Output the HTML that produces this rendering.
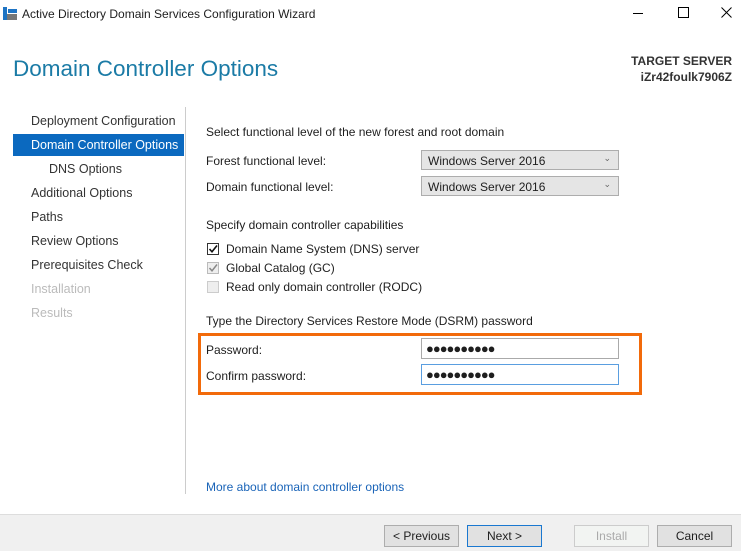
<!DOCTYPE html>
<html><head><style>
body{margin:0;width:741px;height:550px;background:#fff;font-family:"Liberation Sans",sans-serif;font-size:12px;color:#1e1e1e;position:relative;overflow:hidden}
.a{position:absolute;white-space:nowrap}
.nav{left:31px;color:#333;font-size:12.5px}
.sel{position:absolute;left:421px;width:198px;height:20px;border:1px solid #adadad;background:#e5e5e5;box-sizing:border-box}
.sel span{position:absolute;left:6px;top:3px}
.sel i{position:absolute;right:7px;top:2px;font-style:normal;font-size:9px;color:#666}
.cb{position:absolute;left:207px;width:12px;height:12px;border:1px solid #333;box-sizing:border-box;background:#fff}
.inp{position:absolute;left:421px;width:198px;height:21px;border:1px solid #aaa;box-sizing:border-box;font-size:13px;letter-spacing:-1px;padding:1px 0 0 4px;line-height:17px}
.btn{position:absolute;top:525px;width:75px;height:22px;border:1px solid #adadad;background:#e1e1e1;box-sizing:border-box;text-align:center;line-height:20px}
</style></head><body>
<svg class="a" style="left:3px;top:7px" width="14" height="14"><rect x="0" y="0" width="4" height="13" fill="#1e74c4"/><rect x="5" y="2" width="9" height="4" fill="#1e74c4"/><rect x="4" y="7" width="10" height="6" fill="#777"/></svg>
<div class="a" style="left:22px;top:7px;font-size:12px">Active Directory Domain Services Configuration Wizard</div>
<div class="a" style="left:633px;top:13px;width:10px;height:1px;background:#000"></div>
<div class="a" style="left:678px;top:7px;width:9px;height:9px;border:1px solid #000"></div>
<svg class="a" style="left:721px;top:7px" width="11" height="11"><path d="M0.5 0.5L10.5 10.5M10.5 0.5L0.5 10.5" stroke="#000" stroke-width="1"/></svg>
<div class="a" style="left:13px;top:56px;font-size:22.5px;color:#1b7ba6">Domain Controller Options</div>
<div class="a" style="right:9px;top:53px;font-weight:bold;font-size:12px;color:#333;text-align:right;line-height:16px">TARGET SERVER<br>iZr42foulk7906Z</div>
<div class="a" style="left:13px;top:134px;width:171px;height:22px;background:#0b69bf"></div>
<div class="a" style="left:185px;top:107px;width:1px;height:387px;background:#ccc"></div>
<div class="a nav" style="top:114px">Deployment Configuration</div>
<div class="a nav" style="top:138px;color:#fff">Domain Controller Options</div>
<div class="a nav" style="top:162px;left:49px">DNS Options</div>
<div class="a nav" style="top:186px">Additional Options</div>
<div class="a nav" style="top:210px">Paths</div>
<div class="a nav" style="top:234px">Review Options</div>
<div class="a nav" style="top:258px">Prerequisites Check</div>
<div class="a nav" style="top:282px;color:#bbb">Installation</div>
<div class="a nav" style="top:306px;color:#bbb">Results</div>
<div class="a" style="left:206px;top:125px">Select functional level of the new forest and root domain</div>
<div class="a" style="left:206px;top:154px">Forest functional level:</div>
<div class="sel" style="top:150px"><span>Windows Server 2016</span><i>⌄</i></div>
<div class="a" style="left:206px;top:180px">Domain functional level:</div>
<div class="sel" style="top:176px"><span>Windows Server 2016</span><i>⌄</i></div>
<div class="a" style="left:206px;top:218px">Specify domain controller capabilities</div>
<div class="cb" style="top:243px"></div>
<svg class="a" style="left:207px;top:243px" width="12" height="12"><path d="M2.5 6L5 8.8L10 2.5" stroke="#111" stroke-width="1.6" fill="none"/></svg>
<div class="a" style="left:226px;top:242px">Domain Name System (DNS) server</div>
<div class="cb" style="top:262px;border-color:#bbb;background:#eee"></div>
<svg class="a" style="left:207px;top:262px" width="12" height="12"><path d="M2.5 6L5 8.8L10 2.5" stroke="#888" stroke-width="1.5" fill="none"/></svg>
<div class="a" style="left:226px;top:261px">Global Catalog (GC)</div>
<div class="cb" style="top:281px;border-color:#ccc;background:#eee"></div>
<div class="a" style="left:226px;top:280px">Read only domain controller (RODC)</div>
<div class="a" style="left:206px;top:314px">Type the Directory Services Restore Mode (DSRM) password</div>
<div class="a" style="left:198px;top:333px;width:444px;height:62px;border:3px solid #f26a0a;box-sizing:border-box"></div>
<div class="a" style="left:206px;top:343px">Password:</div>
<div class="inp" style="top:338px">●●●●●●●●●●</div>
<div class="a" style="left:206px;top:369px">Confirm password:</div>
<div class="inp" style="top:364px;border-color:#5a9ee0">●●●●●●●●●●</div>
<div class="a" style="left:206px;top:480px;color:#1a64b8">More about domain controller options</div>
<div class="a" style="left:0;top:514px;width:741px;height:36px;background:#f0f0f0;border-top:1px solid #ddd"></div>
<div class="btn" style="left:384px">&lt; Previous</div>
<div class="btn" style="left:467px;border-color:#1a78d0">Next &gt;</div>
<div class="btn" style="left:574px;color:#aaa;background:#f2f4f2;border-color:#ccc">Install</div>
<div class="btn" style="left:657px">Cancel</div>
</body></html>
